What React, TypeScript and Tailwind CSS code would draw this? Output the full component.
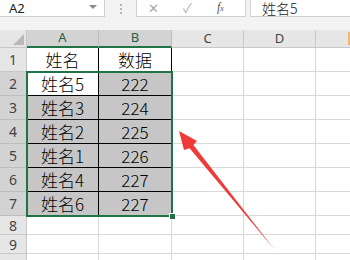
import React from 'react';

const cols = [
  { key: 'A', w: 'w-[72px]', sel: true },
  { key: 'B', w: 'w-[73px]', sel: true },
  { key: 'C', w: 'w-[72px]', sel: false },
  { key: 'D', w: 'w-[72px]', sel: false },
];

const rows: { n: number; h: string; a?: string; b?: string }[] = [
  { n: 1, h: 'h-[24px]', a: '姓名', b: '数据' },
  { n: 2, h: 'h-[24px]', a: '姓名5', b: '222' },
  { n: 3, h: 'h-[24px]', a: '姓名3', b: '224' },
  { n: 4, h: 'h-[24px]', a: '姓名2', b: '225' },
  { n: 5, h: 'h-[24px]', a: '姓名1', b: '226' },
  { n: 6, h: 'h-[24px]', a: '姓名4', b: '227' },
  { n: 7, h: 'h-[24px]', a: '姓名6', b: '227' },
  { n: 8, h: 'h-[19px]' },
  { n: 9, h: 'h-[19px]' },
  { n: 10, h: 'h-[19px]' },
];

const cellFont = { fontFamily: '"Noto Sans CJK SC", "Noto Sans", sans-serif' };

export default function App() {
  return (
    <div className="relative w-[350px] h-[260px] overflow-hidden bg-[#f3f3f3] text-black" style={{ fontFamily: '"Noto Sans", "Noto Sans CJK SC", sans-serif' }}>
      {/* formula bar */}
      <div className="flex h-[17px]">
        <div className="relative flex w-[105px] items-center bg-white border-r border-b border-[#d0d0d0] pl-[9px] text-[13px] leading-[16px] text-[#222]">
          A2
          <span className="absolute right-[7px] top-[5px] h-0 w-0 border-x-[4px] border-t-[4px] border-x-transparent border-t-[#8a8a8a]" />
        </div>
        <div className="flex w-[31px] flex-col items-center justify-center gap-[2px] pt-[1px]">
          <span className="h-[2px] w-[2px] bg-[#b5b5b5]" />
          <span className="h-[2px] w-[2px] bg-[#b5b5b5]" />
          <span className="h-[2px] w-[2px] bg-[#b5b5b5]" />
        </div>
        <div className="flex w-[110px] items-center bg-white border-x border-b border-[#d0d0d0]">
          <span className="ml-[11px] text-[13px] leading-[15px] text-[#a8a8a8]">✕</span>
          <span className="ml-[24px] text-[13px] leading-[15px] text-[#b0b0b0]">✓</span>
          <span className="ml-[25px] text-[12px] leading-[15px] italic text-[#555]" style={{ fontFamily: '"Liberation Serif", serif' }}>
            f<span className="text-[8px]">x</span>
          </span>
        </div>
        <div className="w-[4px]" />
        <div className="flex flex-1 items-center bg-white border-l border-b border-[#d0d0d0] pl-[11px] text-[14px] leading-[15px] text-[#222] font-light" style={cellFont}>
          姓名5
        </div>
      </div>

      <div className="h-[13px]" />

      {/* column headers */}
      <div className="flex h-[18px] bg-[#e6e6e6] text-[13px] text-[#444]">
        <div className="relative w-[27px] border-r border-b border-[#c8c8c8]">
          <svg className="absolute right-[2px] bottom-[2px]" width="11" height="11" viewBox="0 0 11 11">
            <polygon points="11,0 11,11 0,11" fill="#b9b9b9" />
          </svg>
        </div>
        {cols.map((c) => (
          <div
            key={c.key}
            className={`${c.w} flex items-center justify-center border-r ${c.sel ? 'bg-[#d3d3d3] border-r-[#bdbdbd] border-b-2 border-b-[#217346] text-[#2b5e3f]' : 'border-b border-[#c8c8c8]'}`}
          >
            {c.key}
          </div>
        ))}
        <div className="flex-1 border-b border-[#c8c8c8] flex justify-end pt-[2px] pb-[2px]">
          <span className="w-[2px] bg-[#f2b66d]" />
        </div>
      </div>

      {/* rows */}
      {rows.map((r) => {
        const inSel = r.n >= 2 && r.n <= 7;
        const hasData = r.n <= 7;
        return (
          <div key={r.n} className={`flex ${r.h} bg-white`}>
            <div className={`w-[27px] flex items-center justify-center border-r border-b text-[14px] text-[#444] ${inSel ? 'bg-[#d3d3d3] border-[#bdbdbd]' : 'bg-[#e6e6e6] border-[#c8c8c8]'}`}>
              {r.n < 10 ? r.n : null}
            </div>
            <div
              className={`w-[72px] flex items-center justify-center border-r border-b text-[17px] leading-none font-light ${hasData ? 'border-black' : 'border-[#d9d9d9]'} ${inSel && r.n !== 2 ? 'bg-[#c6c6c6]' : 'bg-white'}`}
              style={cellFont}
            >
              {r.a}
            </div>
            <div
              className={`w-[73px] flex items-center justify-center border-r border-b text-[17px] leading-none font-light ${hasData ? 'border-black' : 'border-[#d9d9d9]'} ${inSel ? 'bg-[#c6c6c6]' : 'bg-white'}`}
              style={cellFont}
            >
              {r.b}
            </div>
            <div className="w-[72px] border-r border-b border-[#d9d9d9]" />
            <div className="w-[72px] border-r border-b border-[#d9d9d9]" />
            <div className="flex-1 border-b border-[#d9d9d9]" />
          </div>
        );
      })}

      {/* selection outline A2:B7 */}
      <div className="absolute left-[26px] top-[71px] w-[147px] h-[146px] border-2 border-[#217346] pointer-events-none" />
      <div className="absolute left-[169px] top-[213px] w-[7px] h-[7px] bg-[#217346] border border-white" />

      {/* red arrow */}
      <svg className="absolute left-0 top-0 pointer-events-none" width="350" height="260" viewBox="0 0 350 260">
        <polygon points="179,131 197,141 193.4,145 274,249 189.6,148.2 184,150" fill="#f03a3a" />
      </svg>
    </div>
  );
}
